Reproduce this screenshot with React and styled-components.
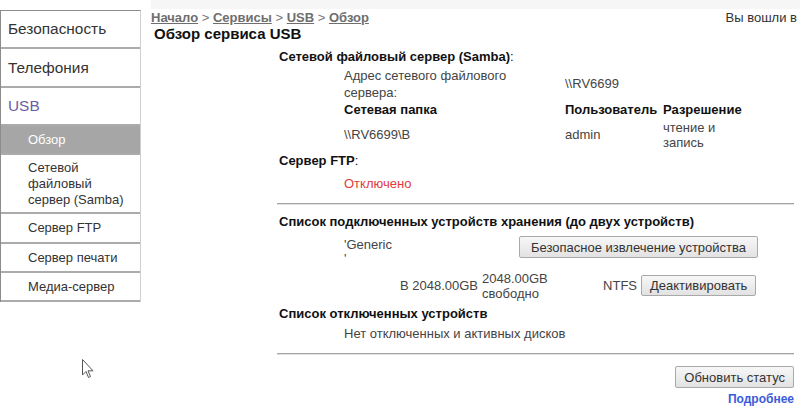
import React from 'react';
import styled, { createGlobalStyle } from 'styled-components';

const GlobalStyle = createGlobalStyle`
  body {
    margin: 0;
    background: #fff;
    font-family: "Liberation Sans", Arial, sans-serif;
    font-size: 13px;
    color: #444;
  }
`;

const Page = styled.div`
  position: relative;
  display: flex;
  width: 800px;
  height: 411px;
  overflow: hidden;
`;

const Sidebar = styled.nav`
  flex: 0 0 141px;
  align-self: flex-start;
  box-sizing: border-box;
  margin-top: 10px;
  border-top: 1px solid #8c8c8c;
  border-left: 1px solid #8c8c8c;
  border-right: 1px solid #cfcfcf;
`;

const NavItem = styled.div`
  box-sizing: border-box;
  display: flex;
  align-items: center;
  height: ${p => p.h}px;
  padding-left: ${p => (p.sub ? 27 : 7)}px;
  font-size: ${p => (p.sub ? 13 : 15.4)}px;
  line-height: 16px;
  color: ${p => (p.active ? '#fff' : p.open ? '#6b5ca5' : '#333')};
  background: ${p => (p.active ? '#a6a6a6' : '#fff')};
  border-bottom: 2px solid #ababab;
`;

const Main = styled.main`
  flex: 1;
  min-width: 0;
  padding-left: 10px;
`;

const TopBand = styled.div`
  height: 9px;
  background: #f6f6f6;
`;

const HeaderRow = styled.div`
  display: flex;
  align-items: center;
  height: 17px;
`;

const Crumbs = styled.div`
  font-size: 13px;
  color: #777;
  white-space: nowrap;
`;

const Crumb = styled.a`
  font-weight: bold;
  color: #6e6e6e;
  text-decoration: underline;
`;

const LoggedIn = styled.div`
  margin-left: auto;
  padding-right: 3px;
  white-space: nowrap;
  color: #333;
`;

const Title = styled.h1`
  margin: 0 0 0 3px;
  height: 16px;
  font-size: 15px;
  line-height: 16px;
  color: #111;
`;

const Content = styled.div`
  width: 517px;
  margin-left: 126px;
`;

const Heading = styled.div`
  height: 20px;
  padding-left: 2px;
  line-height: 20px;
  font-weight: bold;
  color: #111;

  span {
    font-weight: normal;
  }
`;

const SambaGrid = styled.div`
  display: grid;
  grid-template-columns: 221px 98px 1fr;
  padding-left: 67px;
  align-items: center;
`;

const Cell = styled.div`
  box-sizing: border-box;
  height: ${p => p.h}px;
  display: flex;
  align-items: center;
  line-height: ${p => p.lh || 16}px;
  max-width: ${p => p.max || 'none'};
  font-weight: ${p => (p.bold ? 'bold' : 'normal')};
  color: ${p => (p.bold ? '#111' : '#444')};
`;

const Indented = styled.div`
  padding-left: 67px;
  height: ${p => p.h}px;
  line-height: ${p => p.h}px;
  color: ${p => p.color || '#444'};
`;

const Rule = styled.hr`
  margin: ${p => p.top}px 0 0;
  border: 0;
  border-top: 1px solid #a3a3a3;
  height: 1px;
  background: #e2e2e2;
`;

const DeviceRow = styled.div`
  display: grid;
  grid-template-columns: 175px auto;
  align-items: start;
  padding: 4px 0 0 67px;
  height: 31px;
`;

const DeviceName = styled.div`
  padding-top: 2px;
  line-height: 14px;
`;

const SizeRow = styled.div`
  display: grid;
  grid-template-columns: 134px 116px 35px auto;
  column-gap: 4px;
  align-items: center;
  padding-left: 67px;
  height: 37px;
  line-height: 15px;
`;

const Right = styled.div`
  text-align: right;
  white-space: nowrap;
`;

const Button = styled.button`
  justify-self: start;
  height: ${p => p.h || 22}px;
  padding: 0 ${p => p.pad || 8}px;
  font-family: "Liberation Sans", Arial, sans-serif;
  font-size: 13px;
  color: #333;
  background: linear-gradient(#f7f7f7, #e2e2e2);
  border: 1px solid #a9a9a9;
  border-radius: 2px;
  white-space: nowrap;
`;

const Footer = styled.div`
  display: flex;
  flex-direction: column;
  align-items: flex-end;
  padding-top: 11px;
`;

const More = styled.a`
  margin-top: 4px;
  font-size: 12px;
  font-weight: bold;
  color: #3a5bd9;
  text-decoration: none;
`;

const Cursor = styled.svg`
  position: absolute;
  left: 82px;
  top: 359px;
`;

const nav = [
  { label: 'Безопасность', h: 38 },
  { label: 'Телефония', h: 39 },
  { label: 'USB', h: 38, open: true },
  { label: 'Обзор', h: 29, sub: true, active: true },
  { label: <>Сетевой<br />файловый<br />сервер (Samba)</>, h: 59, sub: true },
  { label: 'Сервер FTP', h: 30, sub: true },
  { label: 'Сервер печати', h: 29, sub: true },
  { label: 'Медиа-сервер', h: 29, sub: true },
];

export default function App() {
  return (
    <Page>
      <GlobalStyle />
      <Sidebar>
        {nav.map((item, i) => (
          <NavItem key={i} h={item.h} sub={item.sub} active={item.active} open={item.open}>
            <div>{item.label}</div>
          </NavItem>
        ))}
      </Sidebar>

      <Main>
        <TopBand />
        <HeaderRow>
          <Crumbs>
            <Crumb>Начало</Crumb> &gt; <Crumb>Сервисы</Crumb> &gt; <Crumb>USB</Crumb> &gt; <Crumb>Обзор</Crumb>
          </Crumbs>
          <LoggedIn>Вы вошли в</LoggedIn>
        </HeaderRow>
        <Title>Обзор сервиса USB</Title>

        <Content>
          <div style={{ height: 5 }} />
          <Heading>Сетевой файловый сервер (Samba)<span>:</span></Heading>
          <SambaGrid>
            <Cell h={34} lh={17} max="180px">Адрес сетевого файлового сервера:</Cell>
            <Cell h={34}>\\RV6699</Cell>
            <div />
            <Cell h={18} bold>Сетевая папка</Cell>
            <Cell h={18} bold>Пользователь</Cell>
            <Cell h={18} bold>Разрешение</Cell>
            <Cell h={32}>\\RV6699\B</Cell>
            <Cell h={32}>admin</Cell>
            <Cell h={32} lh={15}>чтение и<br />запись</Cell>
          </SambaGrid>
          <Heading>Сервер FTP<span>:</span></Heading>
          <Indented h={26} color="#e23b3b">Отключено</Indented>
          <Rule top={6} />

          <div style={{ height: 7 }} />
          <Heading>Список подключенных устройств хранения (до двух устройств)</Heading>
          <DeviceRow>
            <DeviceName>'Generic<br />'</DeviceName>
            <Button pad={11}>Безопасное извлечение устройства</Button>
          </DeviceRow>
          <SizeRow>
            <Right>В 2048.00GB</Right>
            <div>2048.00GB<br />свободно</div>
            <Right>NTFS</Right>
            <Button h={21}>Деактивировать</Button>
          </SizeRow>
          <Heading>Список отключенных устройств</Heading>
          <Indented h={20}>Нет отключенных и активных дисков</Indented>
          <Rule top={9} />

          <Footer>
            <Button h={22}>Обновить статус</Button>
            <More>Подробнее</More>
          </Footer>
        </Content>
      </Main>

      <Cursor width="13" height="21" viewBox="0 0 13 21">
        <path d="M0.5 0.5 L0.5 16 L4 12.5 L6.5 18.5 L8.5 17.5 L6 11.8 L11 11.8 Z" fill="#fff" stroke="#555" strokeWidth="1" />
      </Cursor>
    </Page>
  );
}
